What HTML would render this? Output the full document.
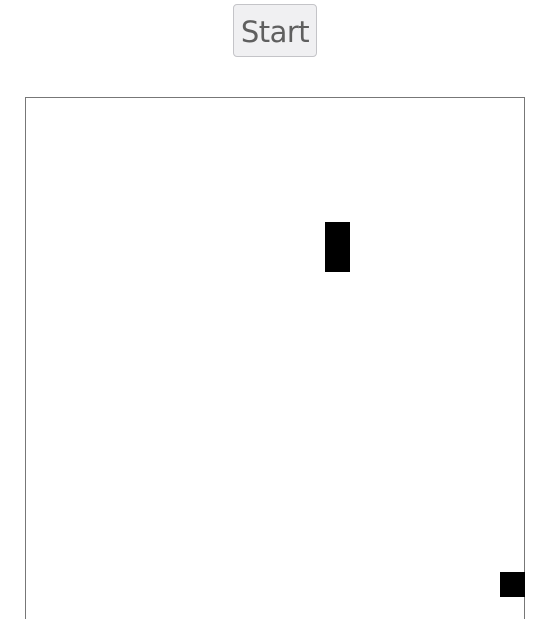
<!DOCTYPE html>
<html><head><style>
html,body{margin:0;padding:0;background:#fff;width:547px;height:619px;overflow:hidden;position:relative}
#btn{position:absolute;left:233px;top:4px;width:82px;height:51px;border:1px solid #c4c4c8;border-radius:4px;background:#f0f0f2;font-family:"DejaVu Sans","Liberation Sans",sans-serif;font-size:29px;color:#5f5f5f;text-align:center;line-height:55px;letter-spacing:-0.5px}
#box{position:absolute;left:25px;top:97px;width:498px;height:522px;border:1px solid #777;border-bottom:none}
.r{position:absolute;background:#000}
</style></head><body>
<div id="btn">Start</div>
<div id="box"></div>
<div class="r" style="left:325px;top:222px;width:25px;height:50px"></div>
<div class="r" style="left:500px;top:572px;width:25px;height:25px"></div>
</body></html>
